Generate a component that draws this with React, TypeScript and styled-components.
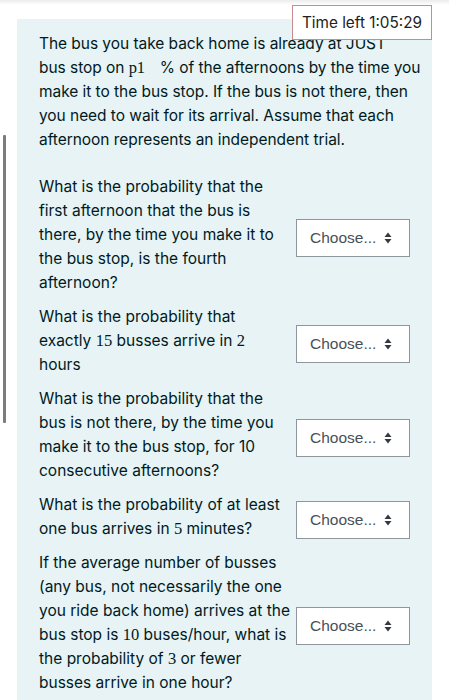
import React from "react";
import styled, { createGlobalStyle } from "styled-components";

const Global = createGlobalStyle`
  html, body { margin: 0; padding: 0; background: #ffffff; }
  body { font-family: Inter, "Noto Sans", "Liberation Sans", sans-serif; color: #1d2125; }
  * { box-sizing: border-box; }
`;

const Page = styled.div`
  position: relative;
  width: 449px;
  height: 700px;
  overflow: hidden;
  background: #fff;
`;

const TopShade = styled.div`
  height: 5px;
  background: linear-gradient(#ececec, #ffffff);
`;

const Body = styled.div`
  display: flex;
  padding-top: 14px;
`;

const Gutter = styled.div`
  width: 17px;
  flex: none;
  padding-left: 3px;
  padding-top: 116px;
`;

const ScrollMark = styled.div`
  width: 3px;
  height: 288px;
  background: #7c7c7c;
  border-radius: 1px;
`;

const Formulation = styled.div`
  width: 415px;
  flex: none;
  min-height: 700px;
  background: #e7f3f5;
  padding: 13px 8px 0 22px;
  color: #001a1e;
  font-size: 15.5px;
  line-height: 24px;
`;

const Intro = styled.p`
  margin: 0 0 23px 0;
  letter-spacing: -0.05px;
`;

const Num = styled.span<{ $trail?: number }>`
  font-family: "Liberation Serif", "DejaVu Serif", serif;
  font-size: 16.5px;
  margin-right: ${(p) => p.$trail ?? 0}px;
`;

const Table = styled.div`
  display: flex;
  flex-direction: column;
  gap: 10px;
`;

const Row = styled.div`
  display: flex;
  align-items: center;
`;

const QText = styled.div`
  width: 257px;
  flex: none;
  padding-right: 5px;
`;

const SelectBox = styled.div`
  margin-top: 6px;
  width: 114px;
  height: 38px;
  background: #fff;
  border: 1px solid #8f959e;
  display: flex;
  align-items: center;
  padding-left: 13px;
  gap: 8px;
  color: #495057;
  font-size: 15.5px;
  font-family: "Liberation Sans", Arial, sans-serif;
`;

const Timer = styled.div`
  position: absolute;
  top: 5px;
  left: 292px;
  width: 140px;
  height: 35px;
  background: #fff;
  border: 1.5px solid #c88a8f;
  display: flex;
  align-items: center;
  justify-content: center;
  font-size: 15.3px;
  color: #1d2125;
`;

const Arrows = () => (
  <svg width="8" height="12" viewBox="0 0 8 12">
    <path d="M4 0.5 L7.5 5 L0.5 5 Z M4 11.5 L7.5 7 L0.5 7 Z" fill="#343a40" />
  </svg>
);

const Select = () => (
  <SelectBox>
    <span>Choose...</span>
    <Arrows />
  </SelectBox>
);

export default function App() {
  return (
    <Page>
      <Global />
      <TopShade />
      <Body>
        <Gutter>
          <ScrollMark />
        </Gutter>
        <Formulation>
          <Intro>
            The bus you take back home is already at JUST
            <br />
            bus stop on <Num $trail={6}>p1</Num>&nbsp; % of the afternoons by the time you make it
            to the bus stop. If the bus is not there, then you need to wait for its arrival. Assume
            that each afternoon represents an independent trial.
          </Intro>
          <Table>
            <Row>
              <QText>
                What is the probability that the first afternoon that the bus is there, by the time
                you make it to the bus stop, is the fourth afternoon?
              </QText>
              <Select />
            </Row>
            <Row>
              <QText>
                What is the probability that exactly <Num>15</Num> busses arrive in <Num>2</Num>{" "}
                hours
              </QText>
              <Select />
            </Row>
            <Row>
              <QText>
                What is the probability that the bus is not there, by the time you make it to the
                bus stop, for 10 consecutive afternoons?
              </QText>
              <Select />
            </Row>
            <Row>
              <QText>
                What is the probability of at least one bus arrives in <Num>5</Num> minutes?
              </QText>
              <Select />
            </Row>
            <Row>
              <QText>
                If the average number of busses (any bus, not necessarily the one you ride back
                home) arrives at the bus stop is <Num>10</Num> buses/hour, what is the probability
                of <Num>3</Num> or fewer busses arrive in one hour?
              </QText>
              <Select />
            </Row>
          </Table>
        </Formulation>
      </Body>
      <Timer>Time left 1:05:29</Timer>
    </Page>
  );
}
